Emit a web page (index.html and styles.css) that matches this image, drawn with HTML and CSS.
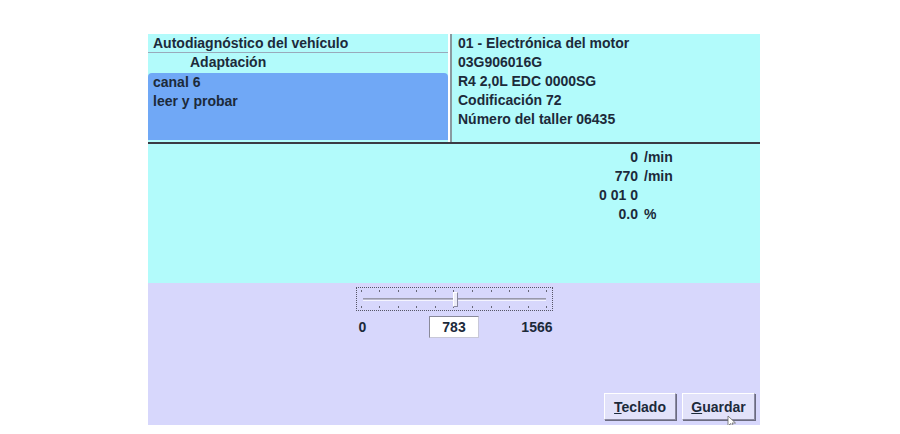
FILE: index.html
```html
<!DOCTYPE html>
<html lang="es">
<head>
  <meta charset="UTF-8" />
  <title>Adaptación</title>
  <link rel="stylesheet" href="styles.css">
</head>
<body>
  <div class="screen">
    <div class="top">
      <div class="left">
        <div class="row head">Autodiagnóstico del vehículo</div>
        <div class="row sub">Adaptación</div>
        <div class="channel">
          <div class="row">canal 6</div>
          <div class="row">leer y probar</div>
        </div>
      </div>
      <div class="divider"></div>
      <div class="right">
        <div class="row">01 - Electrónica del motor</div>
        <div class="row">03G906016G</div>
        <div class="row">R4 2,0L EDC 0000SG</div>
        <div class="row">Codificación 72</div>
        <div class="row">Número del taller 06435</div>
      </div>
    </div>

    <div class="values">
      <div class="grid">
        <span class="num">0</span><span>/min</span>
        <span class="num">770</span><span>/min</span>
        <span class="num">0 01 0</span><span></span>
        <span class="num">0.0</span><span>%</span>
      </div>
    </div>

    <div class="control">
      <div class="slider">
        <div class="ticks"><i></i><i></i><i></i><i></i><i></i><i></i><i></i><i></i><i></i><i></i><i></i></div>
        <div class="track"><div class="thumb"></div></div>
        <div class="ticks"><i></i><i></i><i></i><i></i><i></i><i></i><i></i><i></i><i></i><i></i><i></i></div>
      </div>
      <div class="range">
        <span class="min">0</span>
        <div class="field">783</div>
        <span class="max">1566</span>
      </div>
      <div class="buttons">
        <button><u>T</u>eclado</button>
        <button><u>G</u>uardar</button>
        <svg class="cursor" width="10" height="14" viewBox="0 0 10 14">
          <path d="M1 1 L1 11 L3.5 8.5 L5.5 13 L7 12.3 L5 8 L8.5 8 Z" fill="#fff" stroke="#666" stroke-width="0.8"/>
        </svg>
      </div>
    </div>
  </div>
</body>
</html>
```

FILE: styles.css
```css
* { box-sizing: border-box; }

html, body {
  margin: 0;
  padding: 0;
  background: #fff;
  font-family: "Liberation Sans", Arial, sans-serif;
  font-size: 14px;
  font-weight: bold;
  color: #1c2a3a;
}

.screen {
  width: 612px;
  height: 391px;
  margin: 34px 0 0 148px;
  display: flex;
  flex-direction: column;
}

.row {
  height: 19px;
  line-height: 19px;
}

.top {
  height: 110px;
  display: flex;
  background: #b2fbfb;
  border-bottom: 2px solid #3a3a44;
}

.left {
  width: 300px;
  display: flex;
  flex-direction: column;
}

.left .head {
  padding-left: 5px;
  border-bottom: 1px solid #9ab;
}

.left .sub {
  padding-left: 42px;
}

.channel {
  flex: 1;
  margin-top: 1px;
  margin-bottom: 2px;
  padding-left: 5px;
  background: #70a8f6;
  border-radius: 4px 4px 0 0;
}

.divider {
  width: 4px;
  border-left: 2px solid #fff;
  background: linear-gradient(to right, #8a9aa0 0 2px, #b2fbfb 2px);
}

.right {
  flex: 1;
  padding-left: 6px;
}

.values {
  height: 139px;
  background: #b2fbfb;
  padding: 4px 0 0 410px;
}

.grid {
  display: grid;
  grid-template-columns: 80px 50px;
  column-gap: 6px;
  line-height: 19px;
}

.num { text-align: right; }

.control {
  flex: 1;
  background: #d7d7fc;
  display: flex;
  flex-direction: column;
  align-items: center;
  padding-top: 4px;
  position: relative;
}

.slider {
  width: 197px;
  height: 24px;
  border: 1px dotted #556;
  display: flex;
  flex-direction: column;
  justify-content: space-between;
  padding: 2px 4px;
}

.ticks {
  display: flex;
  justify-content: space-between;
  height: 2px;
}

.ticks i {
  width: 1px;
  height: 2px;
  background: #667;
}

.track {
  height: 3px;
  margin: 0 2px;
  background: #b8b8cc;
  border-top: 1px solid #9898aa;
  border-bottom: 1px solid #f4f4ff;
  position: relative;
}

.thumb {
  position: absolute;
  left: 90px;
  top: -7px;
  width: 5px;
  height: 15px;
  background: #ececf8;
  border: 1px solid #8888a0;
  border-top-color: #fff;
  border-left-color: #fff;
}

.range {
  width: 197px;
  display: grid;
  grid-template-columns: 1fr auto 1fr;
  align-items: center;
  margin-top: 5px;
}

.range .min { padding-left: 3px; }
.range .max { text-align: right; }

.field {
  width: 50px;
  height: 22px;
  line-height: 20px;
  text-align: center;
  background: #fff;
  border: 1px solid #c8c8d8;
  border-top-color: #8a8a9a;
  border-left-color: #8a8a9a;
}

.buttons {
  margin-top: auto;
  align-self: flex-end;
  display: flex;
  gap: 6px;
  padding: 0 5px 5px 0;
  position: relative;
}

.buttons button {
  height: 27px;
  width: 72px;
  font-family: "Liberation Sans", Arial, sans-serif;
  font-size: 14px;
  font-weight: bold;
  color: #1c2a3a;
  background: #e2e2fa;
  border: 1px solid #8a8aa0;
  border-top-color: #fff;
  border-left-color: #fff;
  box-shadow: 1px 1px 0 #6a6a80;
  padding: 0;
}

.buttons button + button { width: 73px; }

.cursor {
  position: absolute;
  left: 123px;
  top: 22px;
}
```
